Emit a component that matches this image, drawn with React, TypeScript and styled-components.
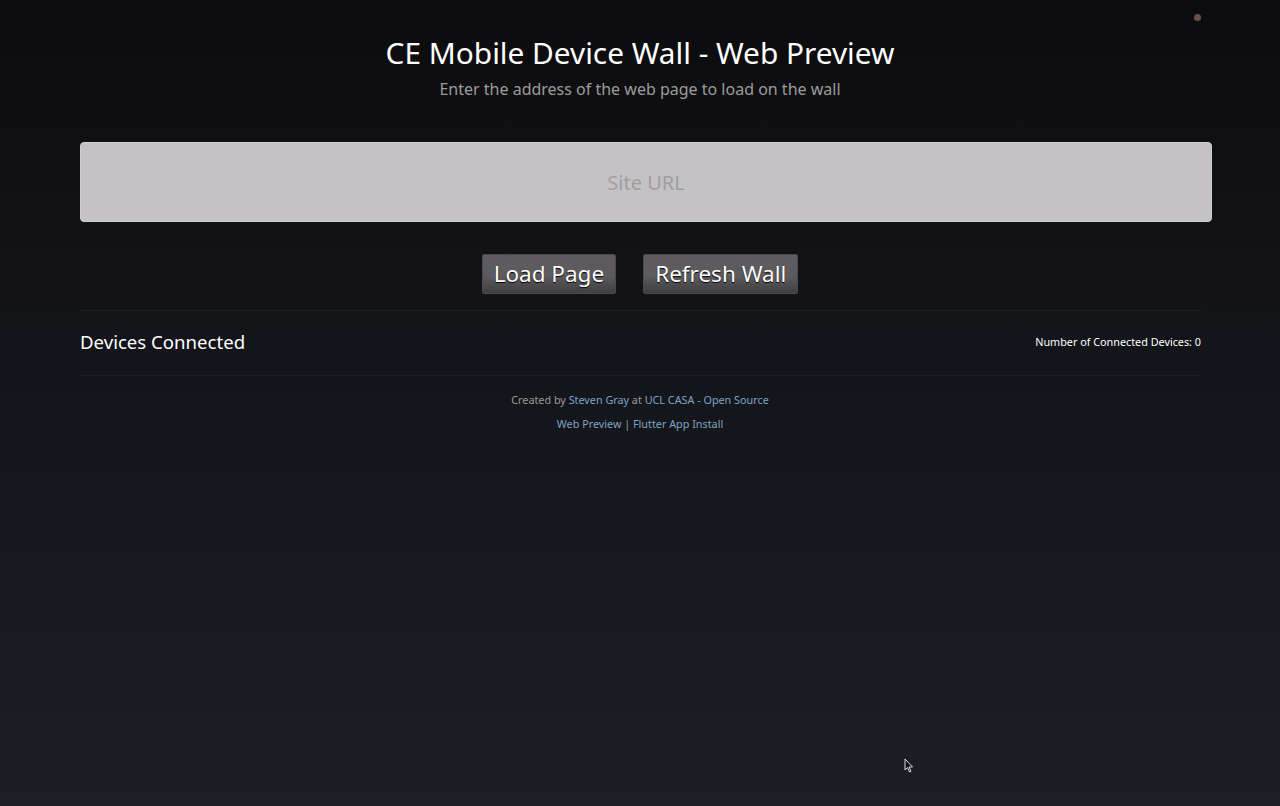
import React from 'react'
import styled, { createGlobalStyle } from 'styled-components'

const GlobalStyle = createGlobalStyle`
    html, body {
        margin: 0;
        padding: 0;
        height: 100%;
    }
    body {
        background: linear-gradient(to bottom, #0c0c0e 0%, #14151a 45%, #1d1e23 100%);
        min-height: 806px;
        font-family: "Noto Sans", "Open Sans", "DejaVu Sans", sans-serif;
        color: #fff;
        overflow: hidden;
    }
`

const Page = styled.main`
    position: relative;
    height: 806px;
    padding: 36px 68px 0 80px;
    box-sizing: border-box;
`

const Header = styled.header`
    display: flex;
    flex-direction: column;
    align-items: center;
    padding-right: 12px;
`

const Title = styled.h1`
    margin: 0;
    font-size: 29.8px;
    font-weight: 400;
    line-height: 34px;
    color: #fff;
`

const Subtitle = styled.p`
    margin: 9px 0 0;
    font-size: 16px;
    line-height: 20px;
    color: #9c9c9c;
`

const UrlInput = styled.input`
    display: block;
    width: 100%;
    height: 80px;
    margin-top: 43px;
    box-sizing: border-box;
    border: 1px solid #d0ced0;
    border-radius: 4px;
    background: #c4c2c4;
    font-family: inherit;
    font-size: 20px;
    text-align: center;
    color: #333;
    outline: none;

    &::placeholder {
        color: #a09ea0;
    }
`

const ButtonRow = styled.div`
    display: flex;
    justify-content: center;
    gap: 27px;
    margin-top: 32px;
    padding-right: 12px;
`

const Button = styled.button`
    height: 40px;
    padding: 0 11px;
    border: 1px solid #4a484a;
    border-radius: 2px;
    background: linear-gradient(to bottom, #5d5b5d 0%, #5d5b5d 55%, #3f3e40 100%);
    font-family: inherit;
    font-size: 22.5px;
    line-height: 38px;
    color: #fff;
    text-shadow: 0 1px 1px #000;
    cursor: pointer;
`

const DevicesBar = styled.section`
    display: flex;
    align-items: center;
    justify-content: space-between;
    height: 61px;
    padding-bottom: 3px;
    margin: 16px 11px 0 0;
    border-top: 1px solid #202126;
    border-bottom: 1px solid #202126;
`

const DevicesTitle = styled.h2`
    margin: 0;
    font-size: 18.6px;
    font-weight: 400;
    color: #fff;
`

const DeviceCount = styled.span`
    font-size: 10.8px;
    color: #fff;
`

const Footer = styled.footer`
    display: flex;
    flex-direction: column;
    align-items: center;
    gap: 6px;
    margin-top: 15px;
    padding-right: 12px;
    font-size: 10.8px;
    line-height: 18px;
    color: #9a9a9a;
`

const FooterLink = styled.a`
    color: #7ea3c6;
    text-decoration: none;
`

const StatusDot = styled.span`
    position: absolute;
    top: 14px;
    left: 1194px;
    width: 7px;
    height: 7px;
    border-radius: 50%;
    background: #6e4a4e;
`

const Cursor = styled.svg`
    position: absolute;
    left: 904px;
    top: 758px;
`

export default function App() {
    return (
        <>
            <GlobalStyle />
            <Page>
                <Header>
                    <Title>CE Mobile Device Wall - Web Preview</Title>
                    <Subtitle>Enter the address of the web page to load on the wall</Subtitle>
                </Header>
                <UrlInput placeholder="Site URL" />
                <ButtonRow>
                    <Button>Load Page</Button>
                    <Button>Refresh Wall</Button>
                </ButtonRow>
                <DevicesBar>
                    <DevicesTitle>Devices Connected</DevicesTitle>
                    <DeviceCount>Number of Connected Devices: 0</DeviceCount>
                </DevicesBar>
                <Footer>
                    <div>
                        Created by <FooterLink href="#">Steven Gray</FooterLink> at{' '}
                        <FooterLink href="#">UCL CASA - Open Source</FooterLink>
                    </div>
                    <div>
                        <FooterLink href="#">Web Preview</FooterLink> |{' '}
                        <FooterLink href="#">Flutter App Install</FooterLink>
                    </div>
                </Footer>
                <StatusDot />
                <Cursor width="11" height="16" viewBox="0 0 11 16">
                    <path d="M1 1 L1 12 L3.5 9.5 L5.5 14 L7 13.3 L5 9 L8.5 9 Z" fill="#111" stroke="#ddd" strokeWidth="1" />
                </Cursor>
            </Page>
        </>
    )
}
